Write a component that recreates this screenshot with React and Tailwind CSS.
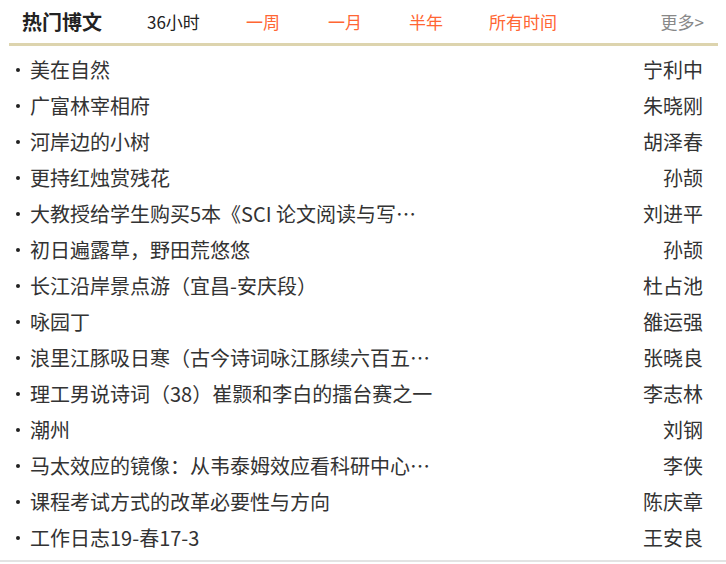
import React from 'react'

const tabs = ['一周', '一月', '半年', '所有时间']

const posts = [
  ['美在自然', '宁利中'],
  ['广富林宰相府', '朱晓刚'],
  ['河岸边的小树', '胡泽春'],
  ['更持红烛赏残花', '孙颉'],
  ['大教授给学生购买5本《SCI 论文阅读与写…', '刘进平'],
  ['初日遍露草，野田荒悠悠', '孙颉'],
  ['长江沿岸景点游（宜昌-安庆段）', '杜占池'],
  ['咏园丁', '雒运强'],
  ['浪里江豚吸日寒（古今诗词咏江豚续六百五…', '张晓良'],
  ['理工男说诗词（38）崔颢和李白的擂台赛之一', '李志林'],
  ['潮州', '刘钢'],
  ['马太效应的镜像：从韦泰姆效应看科研中心…', '李侠'],
  ['课程考试方式的改革必要性与方向', '陈庆章'],
  ['工作日志19-春17-3', '王安良'],
]

export default function App() {
  return (
    <div className="w-[726px] h-[564px] bg-white overflow-hidden font-['Noto_Sans_CJK_SC',sans-serif]">
      <div className="ml-[9px] w-[709px]">
        <div className="h-[43px] flex items-center">
          <h2 className="pl-[13px] w-[138px] text-[20px] font-bold text-[#222] leading-none">热门博文</h2>
          <span className="w-[99px] text-[17px] text-[#222] leading-none">36小时</span>
          <span className="w-[82px] text-[17px] text-[#ff6633] leading-none">{tabs[0]}</span>
          <span className="w-[81px] text-[17px] text-[#ff6633] leading-none">{tabs[1]}</span>
          <span className="w-[80px] text-[17px] text-[#ff6633] leading-none">{tabs[2]}</span>
          <span className="text-[17px] text-[#ff6633] leading-none">{tabs[3]}</span>
          <a className="ml-auto mr-[14px] text-[17px] text-[#888] leading-none">更多&gt;</a>
        </div>
        <div className="h-[3px] bg-[#ddd4ae]" />
        <ul className="pt-[6px]">
          {posts.map(([title, author]) => (
            <li key={title} className="h-[36px] flex items-center text-[20px] text-[#333] leading-none">
              <span className="w-[4px] h-[4px] ml-[7px] mr-[10px] rounded-full bg-[#222]" />
              <span className="flex-1 whitespace-nowrap">{title}</span>
              <span className="mr-[15px] whitespace-nowrap">{author}</span>
            </li>
          ))}
        </ul>
      </div>
      <div className="mt-[4px] h-[2px] bg-[#e3e3e3]" />
    </div>
  )
}
